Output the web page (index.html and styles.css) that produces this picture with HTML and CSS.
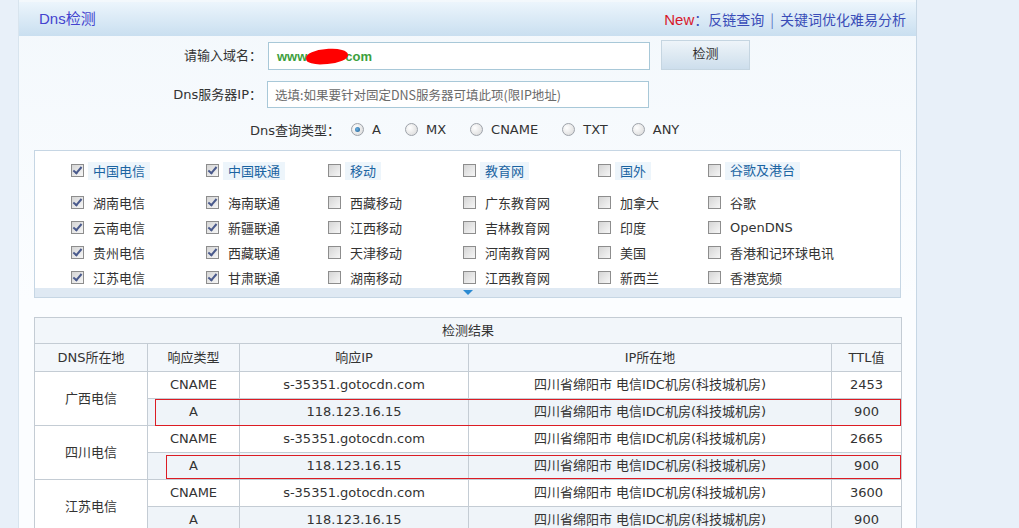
FILE: index.html
```html
<!DOCTYPE html>
<html lang="zh-CN">
<head>
<meta charset="utf-8">
<title>Dns检测</title>
<link rel="stylesheet" href="styles.css">
</head>
<body>
<div class="panel">
  <div class="head">
    <span class="title">Dns检测</span>
    <span class="links"><span class="new">New</span><span class="colon">：</span><a href="#">反链查询</a><span class="sep">|</span><a href="#">关键词优化难易分析</a></span>
  </div>

  <div class="form">
    <div class="frow">
      <label class="lbl">请输入域名：</label>
      <div class="input domain"><span class="dom">www</span><span class="blob"></span><span class="dom">com</span></div>
      <button class="btn" type="button">检测</button>
    </div>
    <div class="frow frow2">
      <label class="lbl">Dns服务器IP：</label>
      <div class="input ph">选填:如果要针对固定DNS服务器可填此项(限IP地址)</div>
    </div>
    <div class="rrow">
      <span class="rlbl">Dns查询类型：</span>
      <span class="ropt"><span class="radio on"></span>A</span>
      <span class="ropt"><span class="radio"></span>MX</span>
      <span class="ropt"><span class="radio"></span>CNAME</span>
      <span class="ropt"><span class="radio"></span>TXT</span>
      <span class="ropt"><span class="radio"></span>ANY</span>
    </div>
  </div>

  <div class="cbox">
    <div class="cbody">
      <div class="crow chead">
        <span class="citem"><span class="ck on"></span><span class="hl">中国电信</span></span>
        <span class="citem"><span class="ck on"></span><span class="hl">中国联通</span></span>
        <span class="citem"><span class="ck"></span><span class="hl">移动</span></span>
        <span class="citem"><span class="ck"></span><span class="hl">教育网</span></span>
        <span class="citem"><span class="ck"></span><span class="hl">国外</span></span>
        <span class="citem"><span class="ck"></span><span class="hl">谷歌及港台</span></span>
      </div>
      <div class="crow">
        <span class="citem"><span class="ck on"></span>湖南电信</span>
        <span class="citem"><span class="ck on"></span>海南联通</span>
        <span class="citem"><span class="ck"></span>西藏移动</span>
        <span class="citem"><span class="ck"></span>广东教育网</span>
        <span class="citem"><span class="ck"></span>加拿大</span>
        <span class="citem"><span class="ck"></span>谷歌</span>
      </div>
      <div class="crow">
        <span class="citem"><span class="ck on"></span>云南电信</span>
        <span class="citem"><span class="ck on"></span>新疆联通</span>
        <span class="citem"><span class="ck"></span>江西移动</span>
        <span class="citem"><span class="ck"></span>吉林教育网</span>
        <span class="citem"><span class="ck"></span>印度</span>
        <span class="citem"><span class="ck"></span>OpenDNS</span>
      </div>
      <div class="crow">
        <span class="citem"><span class="ck on"></span>贵州电信</span>
        <span class="citem"><span class="ck on"></span>西藏联通</span>
        <span class="citem"><span class="ck"></span>天津移动</span>
        <span class="citem"><span class="ck"></span>河南教育网</span>
        <span class="citem"><span class="ck"></span>美国</span>
        <span class="citem"><span class="ck"></span>香港和记环球电讯</span>
      </div>
      <div class="crow">
        <span class="citem"><span class="ck on"></span>江苏电信</span>
        <span class="citem"><span class="ck on"></span>甘肃联通</span>
        <span class="citem"><span class="ck"></span>湖南移动</span>
        <span class="citem"><span class="ck"></span>江西教育网</span>
        <span class="citem"><span class="ck"></span>新西兰</span>
        <span class="citem"><span class="ck"></span>香港宽频</span>
      </div>
    </div>
    <div class="cbar"><span class="tri"></span></div>
  </div>

  <div class="tblwrap">
    <table class="res">
      <colgroup><col class="c1"><col class="c2"><col class="c3"><col class="c4"><col class="c5"></colgroup>
      <tr class="ttl"><td colspan="5">检测结果</td></tr>
      <tr class="th"><td>DNS所在地</td><td>响应类型</td><td>响应IP</td><td>IP所在地</td><td>TTL值</td></tr>
      <tr><td class="loc" rowspan="2">广西电信</td><td>CNAME</td><td>s-35351.gotocdn.com</td><td>四川省绵阳市 电信IDC机房(科技城机房)</td><td>2453</td></tr>
      <tr class="alt"><td>A</td><td>118.123.16.15</td><td>四川省绵阳市 电信IDC机房(科技城机房)</td><td>900</td></tr>
      <tr><td class="loc" rowspan="2">四川电信</td><td>CNAME</td><td>s-35351.gotocdn.com</td><td>四川省绵阳市 电信IDC机房(科技城机房)</td><td>2665</td></tr>
      <tr class="alt"><td>A</td><td>118.123.16.15</td><td>四川省绵阳市 电信IDC机房(科技城机房)</td><td>900</td></tr>
      <tr><td class="loc" rowspan="2">江苏电信</td><td>CNAME</td><td>s-35351.gotocdn.com</td><td>四川省绵阳市 电信IDC机房(科技城机房)</td><td>3600</td></tr>
      <tr class="alt"><td>A</td><td>118.123.16.15</td><td>四川省绵阳市 电信IDC机房(科技城机房)</td><td>900</td></tr>
    </table>
    <span class="mark mark1"></span>
    <span class="mark mark2"></span>
  </div>
</div>
</body>
</html>
```

FILE: styles.css
```css
* { box-sizing: border-box; margin: 0; padding: 0; }
html, body { height: 100%; overflow: hidden; }
body {
  background: #e8f0f9;
  font-family: "DejaVu Sans", "Noto Sans CJK SC", sans-serif;
  font-size: 13px;
  color: #333;
}
.panel {
  margin-left: 18px;
  width: 899px;
  min-height: 700px;
  background: linear-gradient(#f3f8fc, #fbfdff 300px);
  border-left: 1px solid #d8e4ee;
  border-right: 1px solid #c7d7e5;
  padding-top: 2px;
}
.head {
  height: 34px;
  display: flex;
  align-items: center;
  justify-content: space-between;
  padding: 0 10px 0 20px;
  background: linear-gradient(#ecf5fc, #c9dff0);
  line-height: 20px;
}
.title { color: #4343cf; font-size: 15px; font-family: "Liberation Sans", "Noto Sans CJK SC", sans-serif; }
.links { font-size: 14px; font-family: "Noto Sans CJK SC", sans-serif; color: #3a4db8; }
.links a { color: #3a4db8; text-decoration: none; }
.new { color: #d8182a; font-family: "Liberation Sans", sans-serif; font-size: 15px; }
.colon { color: #3a4db8; }
.sep { color: #5a78c8; margin: 0 6px; }

.form { padding-top: 6px; }
.frow { display: flex; align-items: center; height: 28px; }
.frow2 { margin-top: 11px; height: 27px; }
.lbl { width: 243px; text-align: right; color: #333; font-size: 13px; line-height: 18px; }
.input {
  margin-left: 6px;
  width: 382px;
  height: 28px;
  border: 1px solid #a8c8d8;
  background: #fff;
  display: flex;
  align-items: center;
  padding-left: 8px;
}
.frow2 .input { margin-left: 5px; height: 27px; padding-left: 7px; }
.dom { font-family: "Liberation Sans", sans-serif; font-weight: bold; color: #3ca03c; font-size: 13px; }
.blob {
  display: inline-block;
  width: 42px;
  height: 15px;
  margin: 0 -3px 0 -1px;
  background: #f00;
  border-radius: 50% 45% 50% 40%;
  transform: rotate(-4deg);
}
.ph { color: #6a6a6a; font-size: 12.5px; font-family: "Noto Sans CJK SC", sans-serif; }
.btn {
  margin-left: 11px;
  margin-top: -2px;
  width: 89px;
  height: 30px;
  border: 1px solid #c5d5e1;
  background: linear-gradient(#eef4f9, #cddeec);
  color: #333;
  font-family: "Noto Sans CJK SC", sans-serif;
  font-size: 13px;
  padding-bottom: 5px;
}
.rrow {
  margin-top: 11px;
  height: 20px;
  display: flex;
  align-items: center;
  padding-left: 231px;
  gap: 24px;
  font-size: 13px;
}
.rlbl { margin-right: -13px; }
.ropt { display: flex; align-items: center; }
.radio {
  width: 13px;
  height: 13px;
  border-radius: 50%;
  border: 1px solid #9ea3aa;
  background: radial-gradient(circle at 35% 35%, #ffffff, #d6d6d6);
  margin-right: 8px;
  position: relative;
}
.radio.on::after {
  content: "";
  position: absolute;
  left: 3px; top: 3px;
  width: 5px; height: 5px;
  border-radius: 50%;
  background: radial-gradient(circle at 40% 40%, #6cb2e4, #1c5a8c);
}

.cbox {
  margin: 11px 15px 0;
  height: 148px;
  border: 1px solid #c6d6e4;
  background: #fff;
}
.cbody { height: 137px; overflow: hidden; padding-top: 7px; }
.crow {
  display: grid;
  grid-template-columns: 135px 122px 135px 135px 110px 1fr;
  padding-left: 36px;
  height: 25px;
  align-items: center;
}
.chead { margin-bottom: 7px; }
.citem { display: flex; align-items: center; font-family: "Noto Sans CJK SC", sans-serif; font-size: 13px; color: #333; }
.citem:last-child { font-family: "DejaVu Sans", "Noto Sans CJK SC", sans-serif; }
.hl { color: #1b64a2; background: #edf5fb; padding: 0 5px; margin-left: -5px; line-height: 18px; }
.ck {
  width: 13px;
  height: 13px;
  border: 1px solid #8d8d8d;
  background: linear-gradient(135deg, #d5d5d5, #f6f6f6);
  margin-right: 9px;
  position: relative;
  flex: none;
}
.ck.on::after {
  content: "";
  position: absolute;
  left: 3px; top: 0px;
  width: 3px; height: 7px;
  border: solid #4a5a8c;
  border-width: 0 2px 2px 0;
  transform: rotate(40deg);
}
.cbar { height: 9px; background: #dfe9f3; display: flex; justify-content: center; }
.tri {
  width: 0; height: 0;
  margin-top: 2px;
  border-left: 5px solid transparent;
  border-right: 5px solid transparent;
  border-top: 5px solid #2b8ad2;
}

.tblwrap { position: relative; margin: 19px 15px 0; }
.res {
  width: 867px;
  border-collapse: collapse;
  table-layout: fixed;
  background: #fff;
  font-size: 13px;
}
.c1 { width: 113px; } .c2 { width: 92px; } .c3 { width: 229px; } .c4 { width: 363px; } .c5 { width: 70px; }
.res td {
  border: 1px solid #c4ccd4;
  text-align: center;
  height: 27px;
  padding: 0;
  line-height: 16px;
  color: #333;
  white-space: nowrap;
}
.res .ttl td { height: 26px; background: #f2f6fa; }
.res .th td { height: 28px; background: #f3f7fb; }
.res .alt td { background: #eff4f9; }
.res td.loc { background: #fff; }
.mark { position: absolute; z-index: 2; border: 1px solid #dc1c24; pointer-events: none; }
.mark1 { left: 121px; top: 82px; width: 746px; height: 27px; }
.mark2 { left: 132px; top: 138px; width: 735px; height: 24px; }
```
